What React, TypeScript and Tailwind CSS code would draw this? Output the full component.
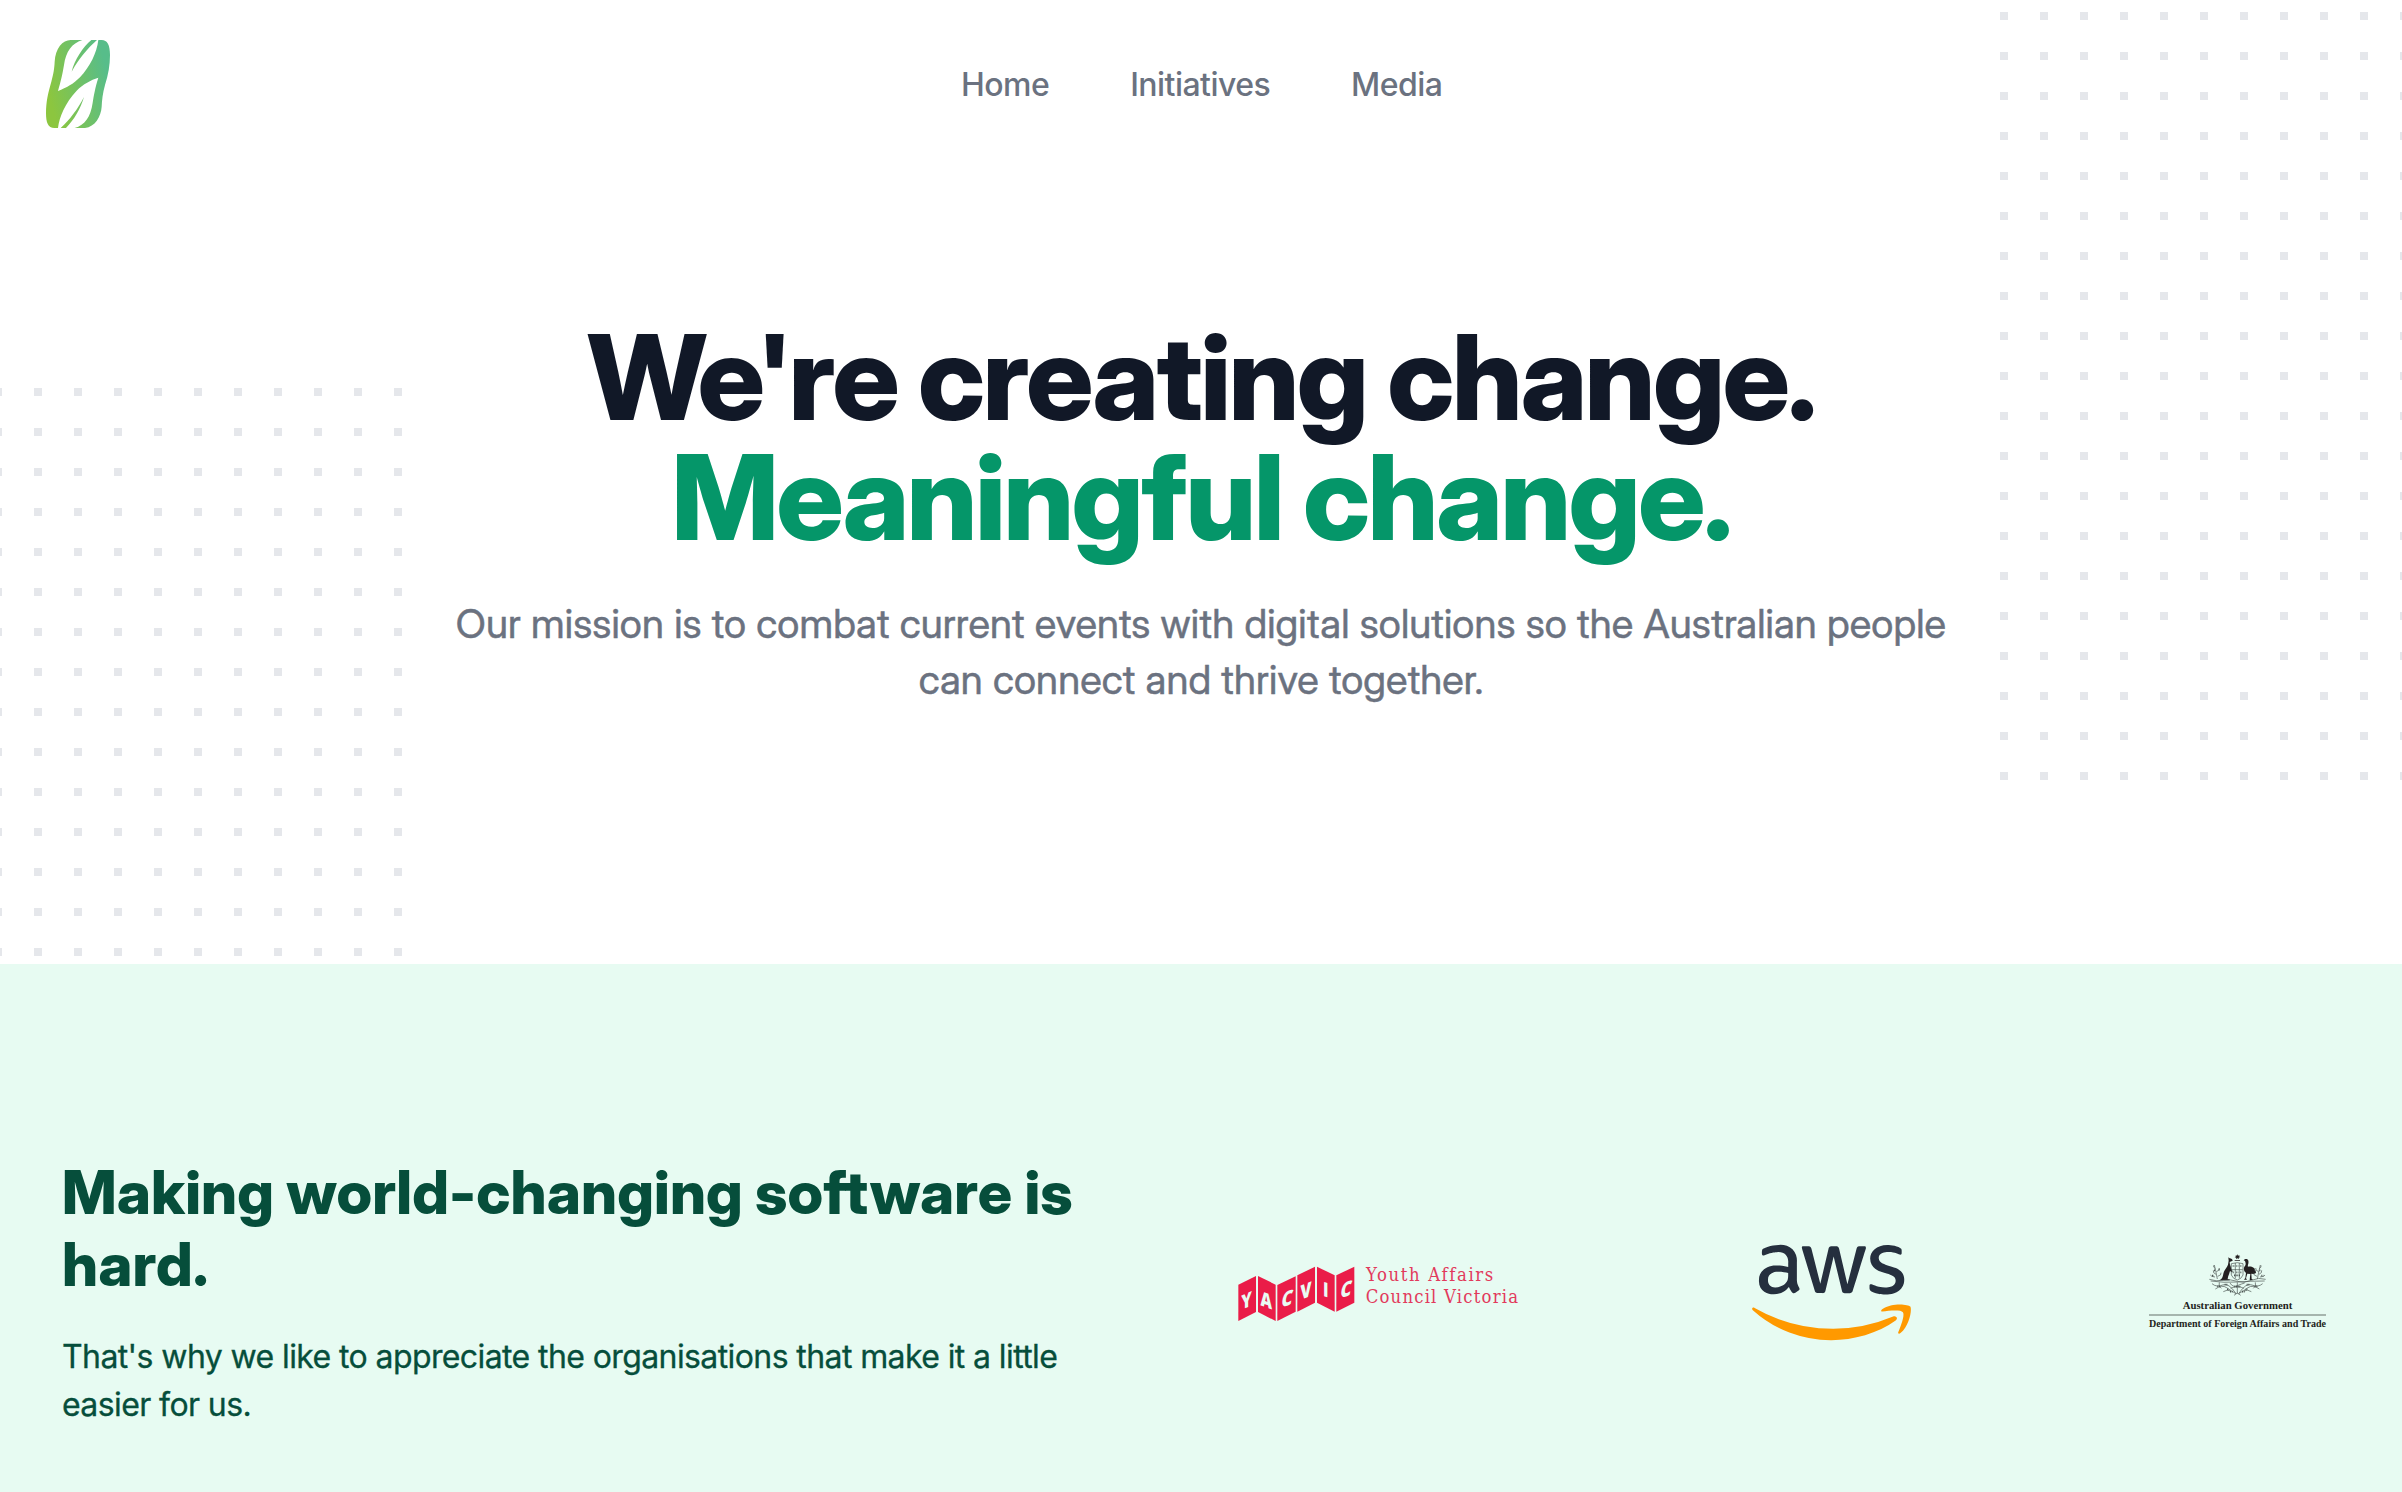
import { FaAws } from "react-icons/fa";

function DotGrid({ id, className, offsetX, offsetY }: { id: string; className: string; offsetX: number; offsetY: number }) {
  return (
    <svg className={className} aria-hidden="true">
      <defs>
        <pattern id={id} x={offsetX} y={offsetY} width="40" height="40" patternUnits="userSpaceOnUse">
          <rect width="8" height="8" fill="#e5e7eb" />
        </pattern>
      </defs>
      <rect width="100%" height="100%" fill={`url(#${id})`} />
    </svg>
  );
}

function LeafLogo() {
  return (
    <svg className="h-[88px] w-16" viewBox="78 60 192 264" aria-label="Logo">
      <defs>
        <linearGradient id="leaf" gradientUnits="userSpaceOnUse" x1="85" x2="265" y1="215" y2="170">
          <stop offset="0" stopColor="#8cc63f" />
          <stop offset="1" stopColor="#57bd8a" />
        </linearGradient>
      </defs>
      <path fill="url(#leaf)" d="M152 60H245C262 60 270 75 270 105C270 135 265 165 255 195C248 220 246 240 245 260C243 290 225 320 195 324H103C84 324 78 308 78 280C78 245 84 220 94 185C101 160 103 145 104 125C106 85 128 60 152 60Z" />
      <path fill="#fff" d="M114 213C122 185 127 165 132 135C138 95 155 70 187 60H235C230 100 210 140 180 172C160 192 140 203 114 213Z" />
      <path fill="url(#leaf)" d="M155 155C163 120 190 80 214 60H231C203 85 177 115 155 155Z" />
      <path fill="#fff" d="M235 173C225 205 222 225 218 248C212 290 195 315 164 324H114C118 290 135 250 170 212C190 192 212 180 235 173Z" />
      <path fill="url(#leaf)" d="M192 231C182 265 162 300 138 324H122C150 298 173 268 192 231Z" />
    </svg>
  );
}

function YacvicLogo() {
  return (
    <svg className="mt-px h-[60px] w-[290px]" viewBox="50 40 870 180" aria-label="Youth Affairs Council Victoria">
      <g fill="#ea1c48">
        <path d="M54 105L107 79V187L54 214Z" />
        <path d="M113 79L166 105V214L113 187Z" />
        <path d="M171 106L226 80V186L171 214Z" />
        <path d="M231 77L284 51V159L231 186Z" />
        <path d="M290 51L343 77V186L290 159Z" />
        <path d="M348 77L402 51V159L348 186Z" />
      </g>
      <g fill="#e9fbf3" fontFamily="'Open Sans', sans-serif" fontWeight="800" fontSize="60" textAnchor="middle">
        <text transform="translate(79 174) skewY(-24) scale(.8 1)">Y</text>
        <text transform="translate(138 173) skewY(20) scale(.8 1)">A</text>
        <text transform="translate(197 169) skewY(-18) skewX(-10) scale(.86 1)">C</text>
        <text transform="translate(257 144) skewY(-22) scale(.8 1)">V</text>
        <text transform="translate(316 141) skewY(18) scale(.8 1)">I</text>
        <text transform="translate(374 141) skewY(-18) skewX(-10) scale(.86 1)">C</text>
      </g>
      <g fill="#e23a5c" className="[font-variant-ligatures:none]" fontFamily="'DejaVu Serif Condensed', 'DejaVu Serif', serif" fontSize="55">
        <text x="437" y="93" textLength="382">Youth Affairs</text>
        <text x="436" y="159" textLength="457">Council Victoria</text>
      </g>
    </svg>
  );
}

function AwsLogo() {
  return (
    <div className="relative ml-[225px]">
      <svg className="absolute h-0 w-0" aria-hidden="true">
        <defs>
          <linearGradient id="aws" gradientUnits="userSpaceOnUse" x1="0" x2="0" y1="0" y2="512">
            <stop offset="0.557" stopColor="#252f3e" />
            <stop offset="0.557" stopColor="#ff9900" />
          </linearGradient>
        </defs>
      </svg>
      <FaAws className="h-[127px] w-[159px]" fill="url(#aws)" aria-label="AWS" />
    </div>
  );
}

function Crest() {
  return (
    <g>
      <path fill="#231f20" d="M322 43l2 5 5-2-2 4 4 2-5 2 1 4-5-2-4 3 1-5-5-1 4-3-1-4 4 2zM314 61h16v2h-16z" />
      <path fill="#231f20" d="M295 53l4 3c5 0 9 3 9 7l-9 4c0 9 4 12 4 19l5 9-2 3-6-4-3 10c-3 7-3 9-4 15h6v3h-34c12-3 13-10 15-20 2-11 10-17 14-27l2-12z" />
      <path fill="#231f20" d="M341 62c4-6 13-5 14 1 2 8-3 14-1 18 12-2 23 4 24 19l-7 3-7-1 1 16 5 3h-11l2-18-9-1-4 14 3 4h-9l4-5 2-16c-8-4-8-15-3-20 4-7 1-11 0-15z" />
      <g fill="none" stroke="#4a5350" strokeWidth="2">
        <path d="M304 72q18-6 35 0v34q-5 12-17 15q-13-3-18-15zM304 90h34M316 70v46M328 70v46" />
        <path d="M308 79h6M319 79h6M331 79h5M308 98h5M319 98h6M331 98h5M312 107h18" strokeWidth="5" strokeDasharray="3 2" />
        <path d="M238 119q20 7 42 3t42 3t42-3t43-3M242 124q40 6 80 3t82-3" />
        <path d="M262 118q-4-22-9-42M258 104q-10-4-8-12M259 96q10-3 9-11M256 87q-7-4-5-10M263 110q12-3 10-11M382 118q4-22 9-42M387 104q10-4 8-12M386 96q-10-3-9-11M388 87q7-4 5-10M381 110q-12-3-10-11M390 112q14-1 15-6M255 112q-12-1-14-6" />
        <path d="M246 132q14 12 32 4t40 26M398 132q-14 12-32 4t-40 26M256 148q20-14 34-4t28 18M388 148q-20-14-34-4t-28 18M280 156q12-8 22-2M364 156q-12-8-22-2M300 130q8 14 22 8t22-8M322 128v34M302 146q20-10 40 0M312 167l10-7 10 7M268 128q-4 12 6 18M376 128q4 12-6 18" />
        <path d="M246 108h6M252 92h5M266 90h5M372 90h5M388 92h5M394 108h6M262 140h8M284 135h10M300 156h8M350 135h10M374 140h8M336 156h8M313 141h18M291 149h6M347 149h6" strokeWidth="5" strokeDasharray="3 2" />
      </g>
    </g>
  );
}

function GovernmentLogo() {
  return (
    <svg className="mt-[2px] ml-[237px] h-[80px] w-[180px]" viewBox="54 40 540 240" aria-label="Australian Government">
      <Crest />
      <g fill="#231f20" fontFamily="'Liberation Serif', serif" fontWeight="700">
        <text x="158" y="209" fontSize="31" textLength="329" lengthAdjust="spacingAndGlyphs">Australian Government</text>
        <text x="57" y="262" fontSize="29" textLength="531" lengthAdjust="spacingAndGlyphs">Department of Foreign Affairs and Trade</text>
      </g>
      <path d="M57 226H588" stroke="#4a5350" strokeWidth="2.5" />
    </svg>
  );
}

export default function App() {
  return (
    <div className="flex h-[1492px] flex-col overflow-hidden bg-white font-['Inter',sans-serif]">
      <div className="relative h-[964px] shrink-0">
        <DotGrid id="dots-left" className="absolute bottom-0 left-0 h-[576px] w-[402px]" offsetX={-6} offsetY={0} />
        <DotGrid id="dots-right" className="absolute top-3 right-0 h-[768px] w-[402px]" offsetX={0} offsetY={0} />
        <header className="relative flex h-[168px] items-center px-[46px]">
          <LeafLogo />
          <nav className="mt-px ml-[851px] flex gap-[81px] text-[32px] leading-[48px] font-medium tracking-[-0.55px] text-[#6b7280]">
            <a>Home</a>
            <a>Initiatives</a>
            <a>Media</a>
          </nav>
        </header>
        <main className="relative pt-[149px] text-center font-['Inter_Display','Inter',sans-serif]">
          <h1 className="text-[118px] leading-[120px] font-extrabold tracking-[-2.57px] text-[#111827]">
            <span className="block">We're creating change.</span>
            <span className="block text-[#059669]">Meaningful change.</span>
          </h1>
          <p className="mx-auto mt-[39px] w-[1536px] text-[40px] leading-[56px] tracking-[0.15px] text-[#6b7280] [-webkit-text-stroke:0.5px_#6b7280]">
            Our mission is to combat current events with digital solutions so the Australian people can connect and thrive together.
          </p>
        </main>
      </div>
      <section className="flex flex-1 items-start bg-[#e7fbf2] pt-48 pl-[62px] text-[#064e3b]">
        <div className="w-[1060px]">
          <h2 className="text-[60px] leading-[72px] font-extrabold tracking-[0.17px] font-['Inter_Display','Inter',sans-serif]">
            Making world-changing software is hard.
          </h2>
          <p className="mt-[33px] w-[1030px] text-[32px] leading-[48px] tracking-[-0.6px] [-webkit-text-stroke:0.3px_#064e3b]">
            That's why we like to appreciate the organisations that make it a little easier for us.
          </p>
        </div>
        <div className="ml-[115px] flex h-[272px] items-center">
          <YacvicLogo />
          <AwsLogo />
          <GovernmentLogo />
        </div>
      </section>
    </div>
  );
}
